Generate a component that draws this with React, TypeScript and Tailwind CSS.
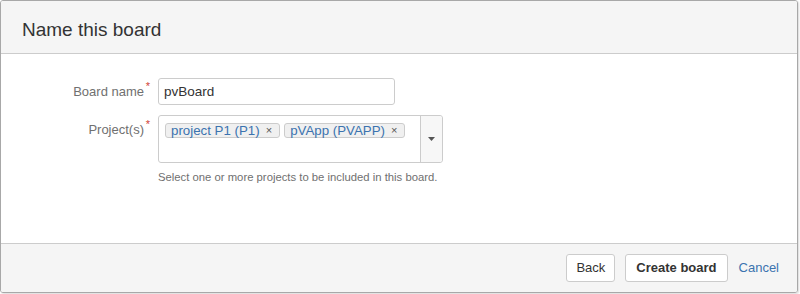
import React from "react";

export default function App() {
  return (
    <div className="w-[800px] h-[294px] bg-white" style={{ fontFamily: '"Liberation Sans", Arial, sans-serif' }}>
      <div className="w-[798px] h-[293px] border border-[#a8a8a8] rounded-[3px] flex flex-col overflow-hidden shadow-[1px_1px_2px_rgba(0,0,0,0.15)]">
        <div className="h-[53px] shrink-0 bg-[#f5f5f5] border-b border-[#cccccc] flex items-center pl-[21px]">
          <h2 className="text-[19px] leading-none text-[#333333] pt-[4px]">Name this board</h2>
        </div>
        <div className="flex-1 bg-white pt-[24px]">
          <div className="flex items-center h-[27px]">
            <label className="w-[143px] text-right text-[13px] text-[#707070] relative">
              Board name<span className="absolute text-[#d04437] text-[11px] -top-[4px] right-[-6px]">*</span>
            </label>
            <input
              readOnly
              value="pvBoard"
              className="ml-[14px] w-[237px] h-[27px] border border-[#cccccc] rounded-[3px] px-[5px] text-[13.5px] text-[#333333] outline-none"
              style={{ fontFamily: '"Liberation Sans", Arial, sans-serif' }}
            />
          </div>
          <div className="flex items-start mt-[10px]">
            <label className="w-[143px] text-right text-[13px] text-[#707070] relative mt-[5px]">
              Project(s)<span className="absolute text-[#d04437] text-[11px] -top-[4px] right-[-6px]">*</span>
            </label>
            <div className="ml-[14px] flex flex-col">
              <div className="w-[285px] h-[48px] border border-[#cccccc] rounded-[3px] flex">
                <div className="flex-1 flex items-start gap-[4px] pl-[6px] pt-[7px]">
                  <span className="h-[15px] flex items-center border border-[#cccccc] bg-[#f0f0f0] rounded-[3px] pl-[5px] pr-[7px] text-[13.3px] text-[#3b73af] leading-none">
                    project P1 (P1)<span className="ml-[6px] text-[11px] text-[#555555]">×</span>
                  </span>
                  <span className="h-[15px] flex items-center border border-[#cccccc] bg-[#f0f0f0] rounded-[3px] pl-[5px] pr-[7px] text-[13.3px] text-[#3b73af] leading-none">
                    pVApp (PVAPP)<span className="ml-[6px] text-[11px] text-[#555555]">×</span>
                  </span>
                </div>
                <div className="w-[22px] border-l border-[#cccccc] bg-[#f7f7f7] flex items-center justify-center rounded-r-[3px]">
                  <svg width="7" height="4" viewBox="0 0 7 4"><path d="M0 0h7L3.5 4z" fill="#555" /></svg>
                </div>
              </div>
              <div className="mt-[9px] text-[11.3px] text-[#707070] leading-none">
                Select one or more projects to be included in this board.
              </div>
            </div>
          </div>
        </div>
        <div className="h-[49px] shrink-0 bg-[#f5f5f5] border-t border-[#cccccc] flex items-center justify-end pr-[18px] gap-[10px]">
          <button className="h-[28px] px-[9px] border border-[#cccccc] rounded-[3px] bg-white text-[13px] text-[#333333]">Back</button>
          <button className="h-[28px] px-[10px] border border-[#cccccc] rounded-[3px] bg-white text-[13px] font-bold text-[#333333]">Create board</button>
          <a className="text-[13px] text-[#3b73af] ml-[1px]">Cancel</a>
        </div>
      </div>
    </div>
  );
}
